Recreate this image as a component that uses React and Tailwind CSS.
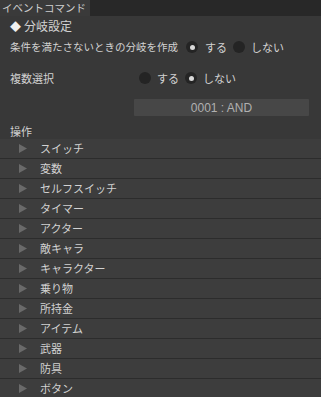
import React from "react";

const items = ["スイッチ","変数","セルフスイッチ","タイマー","アクター","敵キャラ","キャラクター","乗り物","所持金","アイテム","武器","防具","ボタン"];

function Radio({ on }) {
  return (
    <span className="w-[12px] h-[12px] rounded-full bg-[#242424] flex items-center justify-center shrink-0">
      {on && <span className="w-[5px] h-[5px] rounded-full bg-[#d8d8d8]" />}
    </span>
  );
}

export default function App() {
  return (
    <div className="w-[321px] h-[397px] bg-[#383838] text-[#d2d2d2] text-[11px] leading-none overflow-hidden" style={{ fontFamily: '"Noto Sans CJK JP", "Noto Sans", sans-serif' }}>
      <div className="h-[16px] bg-[#282828] flex">
        <div className="w-[90px] h-full bg-[#3a3a3a] flex items-center pl-[2px] text-[10.5px] text-[#cfcfcf]">イベントコマンド</div>
      </div>
      <div className="h-[16px] mt-[2px] flex items-center pl-[10px] text-[12px]">
        <span className="text-[#f0f0f0] text-[11px] mr-[3px]">◆</span>
        <span>分岐設定</span>
      </div>
      <div className="h-[16px] mt-[5px] flex items-center pl-[10px]">
        <span className="w-[176px] shrink-0 text-[10.5px]">条件を満たさないときの分岐を作成</span>
        <Radio on />
        <span className="ml-[7px] mr-[6px]">する</span>
        <Radio />
        <span className="ml-[6px]">しない</span>
      </div>
      <div className="h-[16px] mt-[15px] flex items-center pl-[10px]">
        <span className="w-[129px] shrink-0">複数選択</span>
        <Radio />
        <span className="ml-[6px] mr-[6px]">する</span>
        <Radio on />
        <span className="ml-[6px]">しない</span>
      </div>
      <div className="ml-[134px] mt-[13px] w-[175px] h-[17px] bg-[#474747] rounded-[1px] flex items-center justify-center text-[#b0b0b0] text-[12px]">
        <span style={{ fontFamily: '"Liberation Sans", sans-serif' }}>0001 : AND</span>
      </div>
      <div className="h-[14px] mt-[8px] flex items-center pl-[10px]">操作</div>
      <div className="mt-[1px]">
        {items.map((t) => (
          <div key={t} className="h-[20px] bg-[#3d3d3d] border-b border-[#2c2c2c] flex items-center">
            <svg width="8" height="9" viewBox="0 0 8 9" className="ml-[19px] mr-[13px]">
              <polygon points="0,0 8,4.5 0,9" fill="#6a6a6a" />
            </svg>
            <span>{t}</span>
          </div>
        ))}
      </div>
    </div>
  );
}
